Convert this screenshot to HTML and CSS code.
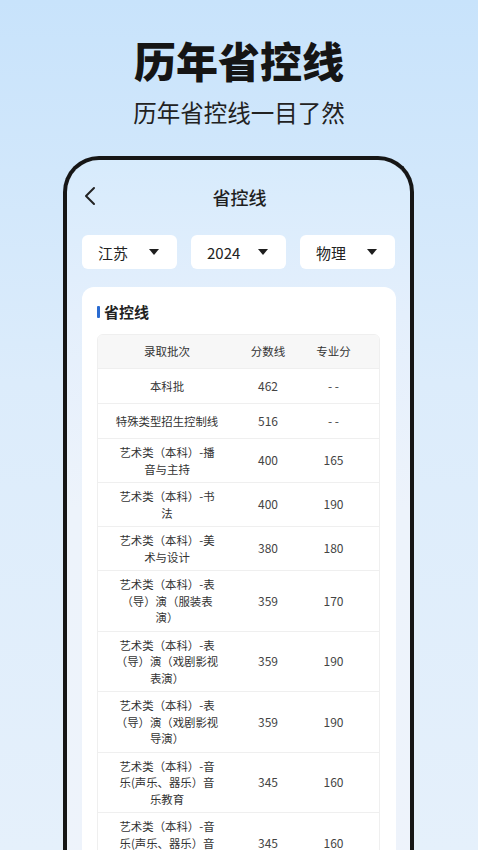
FILE: index.html
```html
<!DOCTYPE html>
<html lang="zh">
<head>
<meta charset="utf-8">
<title>历年省控线</title>
<link rel="stylesheet" href="styles.css">
</head>
<body>
<div class="page">
  <h1 class="hero-title">历年省控线</h1>
  <p class="hero-sub">历年省控线一目了然</p>
  <div class="phone">
    <div class="nav">
      <svg class="back" width="12" height="20" viewBox="0 0 12 20"><path d="M10 2 L2 10 L10 18" fill="none" stroke="#222" stroke-width="2" stroke-linecap="round" stroke-linejoin="round"/></svg>
      <div class="nav-title">省控线</div>
    </div>
    <div class="filters">
      <div class="select"><span>江苏</span><i class="caret"></i></div>
      <div class="select"><span>2024</span><i class="caret"></i></div>
      <div class="select"><span>物理</span><i class="caret"></i></div>
    </div>
    <div class="card">
      <div class="card-title">省控线</div>
      <div class="table">
        <div class="row head"><div class="c1">录取批次</div><div class="c2">分数线</div><div class="c3">专业分</div></div>
        <div class="row"><div class="c1">本科批</div><div class="c2">462</div><div class="c3">- -</div></div>
        <div class="row"><div class="c1">特殊类型招生控制线</div><div class="c2">516</div><div class="c3">- -</div></div>
        <div class="row"><div class="c1">艺术类（本科）-播<br>音与主持</div><div class="c2">400</div><div class="c3">165</div></div>
        <div class="row"><div class="c1">艺术类（本科）-书<br>法</div><div class="c2">400</div><div class="c3">190</div></div>
        <div class="row"><div class="c1">艺术类（本科）-美<br>术与设计</div><div class="c2">380</div><div class="c3">180</div></div>
        <div class="row"><div class="c1">艺术类（本科）-表<br>（导）演（服装表<br>演）</div><div class="c2">359</div><div class="c3">170</div></div>
        <div class="row"><div class="c1">艺术类（本科）-表<br>（导）演（戏剧影视<br>表演）</div><div class="c2">359</div><div class="c3">190</div></div>
        <div class="row"><div class="c1">艺术类（本科）-表<br>（导）演（戏剧影视<br>导演）</div><div class="c2">359</div><div class="c3">190</div></div>
        <div class="row"><div class="c1">艺术类（本科）-音<br>乐(声乐、器乐）音<br>乐教育</div><div class="c2">345</div><div class="c3">160</div></div>
        <div class="row"><div class="c1">艺术类（本科）-音<br>乐(声乐、器乐）音<br>乐教育</div><div class="c2">345</div><div class="c3">160</div></div>
      </div>
    </div>
  </div>
</div>
</body>
</html>
```

FILE: styles.css
```css
* { box-sizing: border-box; }
html, body { margin: 0; padding: 0; }
body {
  width: 478px;
  height: 850px;
  overflow: hidden;
  font-family: "Noto Sans CJK SC", "Noto Sans", sans-serif;
  background: linear-gradient(180deg, #c8e3fb 0%, #dcecfb 45%, #e5f0fb 100%);
  color: #222;
}
.page {
  display: flex;
  flex-direction: column;
  align-items: center;
}
.hero-title {
  margin: 35px 0 0;
  height: 50px;
  line-height: 50px;
  font-size: 42px;
  font-weight: 900;
  color: #151515;
}
.hero-sub {
  margin: 12px 0 0;
  height: 30px;
  line-height: 30px;
  font-size: 23.5px;
  font-weight: 400;
  color: #222;
}
.phone {
  margin: 29px 0 0 -1px;
  width: 351px;
  border: 4px solid #161616;
  border-bottom: none;
  border-radius: 36px 36px 0 0;
  background: linear-gradient(180deg, #d7ebfc 0%, #e4effc 20%, #edf3fb 45%, #eef3fb 100%);
  padding-bottom: 40px;
}
.nav {
  position: relative;
  height: 44px;
  margin-top: 15px;
  display: flex;
  align-items: center;
  justify-content: center;
}
.back {
  position: absolute;
  left: 17px;
  top: 11px;
}
.nav-title {
  font-size: 18px;
  font-weight: 500;
  color: #1e1e1e;
  margin-left: 2px;
}
.filters {
  margin-top: 16px;
  padding: 0 15px;
  display: grid;
  grid-template-columns: repeat(3, 1fr);
  gap: 14px;
}
.select {
  height: 34px;
  background: #fff;
  border-radius: 6px;
  display: flex;
  align-items: center;
  justify-content: space-between;
  padding: 0 18px 0 16px;
  font-size: 15px;
  color: #222;
}
.caret {
  width: 0;
  height: 0;
  border-left: 5px solid transparent;
  border-right: 5px solid transparent;
  border-top: 6px solid #1e1e1e;
}
.card {
  margin: 18px 14px 0 15px;
  background: #fff;
  border-radius: 12px;
  padding: 15px 16px 20px 15px;
}
.card-title {
  height: 20px;
  line-height: 20px;
  font-size: 15px;
  font-weight: 700;
  color: #222;
  display: flex;
  align-items: center;
  gap: 4px;
}
.card-title::before {
  content: "";
  width: 3px;
  height: 12px;
  background: #2a6bd1;
  border-radius: 1px;
}
.table {
  margin-top: 12px;
  border: 1px solid #efefef;
  border-radius: 6px;
  overflow: hidden;
}
.row {
  display: grid;
  grid-template-columns: 138px 64px 1fr;
  min-height: 35px;
  border-bottom: 1px solid #efefef;
  align-items: center;
  font-size: 11.4px;
  line-height: 16.5px;
  color: #333;
}
.row.head {
  background: #f7f7f7;
  min-height: 34px;
  font-size: 11.5px;
  color: #333;
}
.row > div {
  text-align: center;
  white-space: nowrap;
  padding: 5px 0;
}
.c2, .c3 {
  font-size: 12px;
  color: #444;
}
.row.head .c2, .row.head .c3 { font-size: 11.5px; color: #333; }
.c3 { padding-right: 12px !important; }
```
